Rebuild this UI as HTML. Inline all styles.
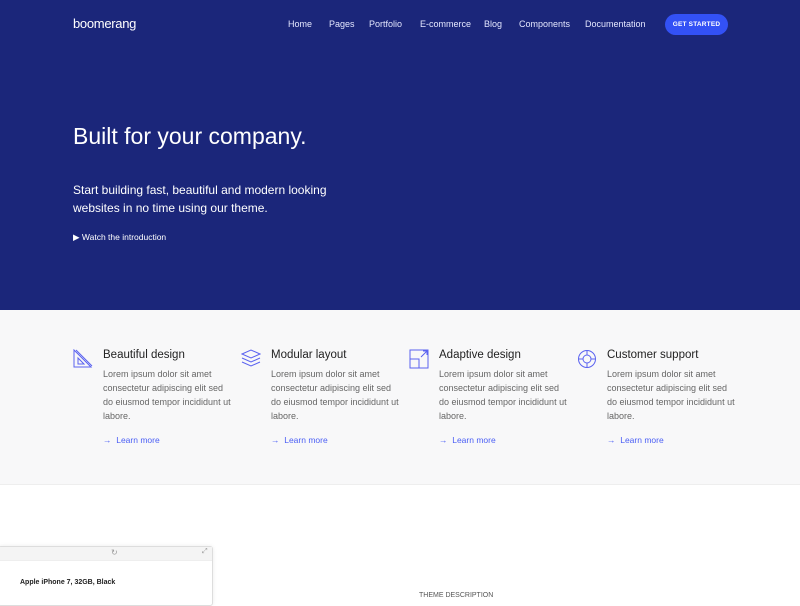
<!DOCTYPE html>
<html><head><meta charset="utf-8"><style>
*{margin:0;padding:0;box-sizing:border-box}
body{width:800px;height:600px;overflow:hidden;font-family:"Liberation Sans",sans-serif;background:#fff;position:relative}
.hero{position:absolute;left:0;top:0;width:800px;height:310px;background:#1b267a}
.logo{position:absolute;left:73px;top:16px;color:#fff;font-size:13px;letter-spacing:-.3px}
.nav{position:absolute;top:19px;color:#e4e7ff;font-size:9px}
.btn{position:absolute;left:665px;top:14px;width:63px;height:21px;border-radius:11px;background:#3351f5;color:#fff;font-size:6.5px;font-weight:bold;text-align:center;line-height:21px;letter-spacing:.2px}
h1{position:absolute;left:73px;top:123px;color:#fff;font-size:23px;font-weight:normal}
.sub{position:absolute;left:73px;top:181px;color:#fff;font-size:12px;line-height:18px}
.watch{position:absolute;left:73px;top:232px;color:#fff;font-size:8.5px}
.feat{position:absolute;left:0;top:310px;width:800px;height:175px;background:#f8f8f9;border-bottom:1px solid #eee}
.f{position:absolute;top:347px;width:160px}
.f h3{position:absolute;left:30px;top:2px;font-size:11.5px;font-weight:normal;color:#222;white-space:nowrap}
.f p{position:absolute;left:30px;top:20px;font-size:9px;color:#666;line-height:14px;width:128px}
.f a{position:absolute;left:30px;top:88px;font-size:8.5px;color:#4a5ef5;white-space:nowrap}
.f svg{position:absolute;left:0;top:2px}
.win{position:absolute;left:-2px;top:546px;width:215px;height:60px;border:1px solid #ddd;border-radius:3px;background:#fff;box-shadow:0 0 4px rgba(0,0,0,.08)}
.bar{height:14px;background:#f4f4f4;border-bottom:1px solid #eee}
.td{position:absolute;left:419px;top:592px;font-size:7px;color:#555}
</style></head><body>
<div class="hero"></div>
<div class="logo">boomerang</div>
<div class="nav" style="left:288px">Home</div>
<div class="nav" style="left:329px">Pages</div>
<div class="nav" style="left:369px">Portfolio</div>
<div class="nav" style="left:420px">E-commerce</div>
<div class="nav" style="left:484px">Blog</div>
<div class="nav" style="left:519px">Components</div>
<div class="nav" style="left:585px">Documentation</div>
<div class="btn">GET STARTED</div>
<h1>Built for your company.</h1>
<div class="sub">Start building fast, beautiful and modern looking<br>websites in no time using our theme.</div>
<div class="watch">▶&nbsp;Watch the introduction</div>
<div class="feat"></div>
<div class="f" style="left:73px"><svg width="20" height="20" viewBox="0 0 20 20" fill="none" stroke="#5a62f0" stroke-width="1"><path d="M1 1L18 18H1Z M5 9L11 15H5Z M3 1L19 17"/></svg><h3>Beautiful design</h3><p>Lorem ipsum dolor sit amet consectetur adipiscing elit sed do eiusmod tempor incididunt ut labore.</p><a>→&nbsp; Learn more</a></div>
<div class="f" style="left:241px"><svg width="20" height="20" viewBox="0 0 20 20" fill="none" stroke="#5a62f0" stroke-width="1"><path d="M1 5L10 1L19 5L10 9Z M1 9L10 13L19 9 M1 13L10 17L19 13"/></svg><h3>Modular layout</h3><p>Lorem ipsum dolor sit amet consectetur adipiscing elit sed do eiusmod tempor incididunt ut labore.</p><a>→&nbsp; Learn more</a></div>
<div class="f" style="left:409px"><svg width="20" height="20" viewBox="0 0 20 20" fill="none" stroke="#5a62f0" stroke-width="1"><path d="M1 1H19V19H1Z M1 10H10V19 M12 8L18 2 M14 2H18V6"/></svg><h3>Adaptive design</h3><p>Lorem ipsum dolor sit amet consectetur adipiscing elit sed do eiusmod tempor incididunt ut labore.</p><a>→&nbsp; Learn more</a></div>
<div class="f" style="left:577px"><svg width="20" height="20" viewBox="0 0 20 20" fill="none" stroke="#5a62f0" stroke-width="1"><circle cx="10" cy="10" r="8.5"/><circle cx="10" cy="10" r="4"/><path d="M10 1.5V6 M10 14V18.5 M1.5 10H6 M14 10H18.5"/></svg><h3>Customer support</h3><p>Lorem ipsum dolor sit amet consectetur adipiscing elit sed do eiusmod tempor incididunt ut labore.</p><a>→&nbsp; Learn more</a></div>
<div class="win"><div class="bar"><span style="position:absolute;left:112px;top:1px;font-size:8px;color:#999">↻</span><span style="position:absolute;left:203px;top:1px;font-size:7px;color:#999">⤢</span></div><div style="position:absolute;left:21px;top:32px;font-size:7px;font-weight:bold;color:#222">Apple iPhone 7, 32GB, Black</div></div>
<div class="td">THEME DESCRIPTION</div>
</body></html>
